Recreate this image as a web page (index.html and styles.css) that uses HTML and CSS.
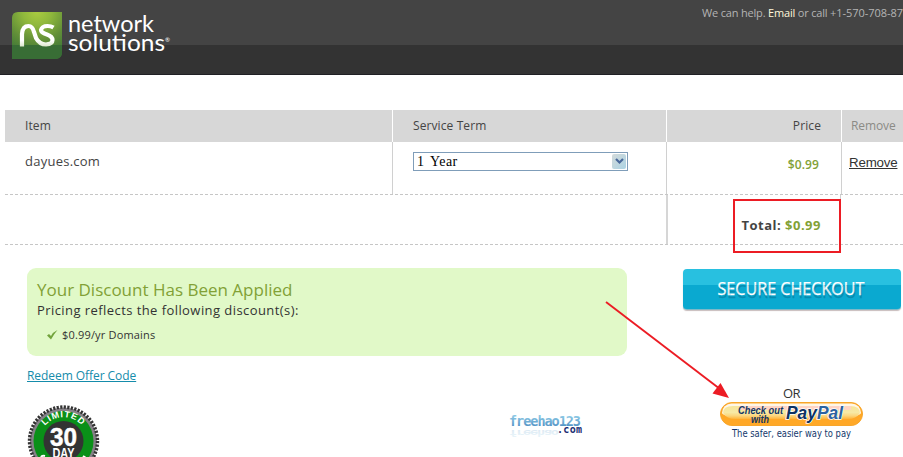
FILE: index.html
```html
<!DOCTYPE html>
<html lang="en">
<head>
<meta charset="utf-8">
<title>Network Solutions - Cart</title>
<link rel="stylesheet" href="styles.css">
</head>
<body>
<header class="header">
  <svg class="logo" width="170" height="50" viewBox="0 0 170 50">
    <defs>
      <radialGradient id="leaf" cx=".5" cy="0" r=".95"><stop offset="0" stop-color="#a9cb40"/><stop offset=".3" stop-color="#8fb83c"/><stop offset=".65" stop-color="#628f38"/><stop offset="1" stop-color="#3d7637"/></radialGradient>
      <linearGradient id="ribbon" x1="0" y1="0" x2="0" y2="1"><stop offset="0" stop-color="#fff"/><stop offset=".7" stop-color="#fff"/><stop offset="1" stop-color="#dbe6cc"/></linearGradient>
    </defs>
    <path d="M6 0H50V40Q50 47 43 47H0V6Q0 0 6 0Z" fill="url(#leaf)"/>
    <path d="M0 33H50V40Q50 47 43 47H0Z" fill="#386d35"/>
    <path d="M10 34.500V22Q10.500 14 16.500 14Q20.500 14 22 20L24 26Q27.500 32.500 34 32.500Q40.500 32 40.500 28Q40.500 24.500 35 22.500Q29 20.500 29 18Q30 14 35.500 14Q39 14 41.500 15.500" fill="none" stroke="url(#ribbon)" stroke-width="4.200"/>
    <g class="logo-text" transform="scale(1 1.120)"><text x="56" y="17.800" textLength="86" lengthAdjust="spacingAndGlyphs">network</text><text x="56" y="34.800" textLength="97" lengthAdjust="spacingAndGlyphs">solutions</text></g>
    <text class="logo-reg" x="153" y="30">®</text>
  </svg>
  <p class="help">We can help. <a class="help-link">Email</a> or call <span class="phone">+1-570-708-878</span></p>
</header>
<main class="cart">
  <div class="row row-head">
    <div class="cell">Item</div>
    <div class="cell">Service Term</div>
    <div class="cell price">Price</div>
    <div class="cell muted">Remove</div>
  </div>
  <div class="row row-item">
    <div class="cell domain">dayues.com</div>
    <div class="cell"><div class="select"><span>1 Year</span><span class="select-btn"><svg width="9" height="7" viewBox="0 0 9 7"><path d="M1 1L4.500 4.500L8 1" fill="none" stroke="#49699b" stroke-width="2.200"/></svg></span></div></div>
    <div class="cell price amount">$0.99</div>
    <div class="cell"><a class="remove">Remove</a></div>
  </div>
  <div class="row row-total">
    <div class="cell"></div>
    <div class="cell price total">Total: <span class="total-sum">$0.99</span><span class="highlight"></span></div>
    <div class="cell"></div>
  </div>
  <div class="bottom">
    <section class="left">
      <div class="discount">
        <h2 class="discount-title">Your Discount Has Been Applied</h2>
        <p class="discount-text">Pricing reflects the following discount(s):</p>
        <p class="discount-item"><svg width="11" height="10" viewBox="0 0 11 10"><path d="M0 5.500L2 4L4 6Q6 2 10.500 0Q7 4 4 9.500Z" fill="#72a33c"/></svg><span>$0.99/yr Domains</span></p>
      </div>
      <a class="redeem">Redeem Offer Code</a>
      <div class="badges">
        <svg class="seal" width="73" height="53" viewBox="0 0 73 53">
          <circle cx="36.500" cy="36" r="33.500" fill="#858187"/>
          <circle cx="36.500" cy="36" r="34" fill="none" stroke="#333" stroke-width="3.400" stroke-dasharray="2.200 1.360"/>
          <circle cx="36.500" cy="36" r="30" fill="#0a9018"/>
          <circle cx="36.500" cy="36" r="20" fill="#333"/>
          <path id="seal-arc" d="M14.500 26.500A24 24 0 0 1 58.500 26.500" fill="none"/>
          <text class="seal-limited"><textPath href="#seal-arc" startOffset="50%">LIMITED</textPath></text>
          <text class="seal-num" x="36.500" y="41" textLength="27" lengthAdjust="spacingAndGlyphs">30</text>
          <text class="seal-day" x="36.500" y="53" textLength="22" lengthAdjust="spacingAndGlyphs">DAY</text>
          <path d="M14 52q1-2 4-1M56 51l3 2" stroke="#fff" stroke-width="2" fill="none"/>
        </svg>
        <svg class="watermark" width="76" height="28" viewBox="0 0 76 28">
          <defs><linearGradient id="wm" x1="0" y1="0" x2="0" y2="1"><stop offset=".2" stop-color="#8cc8e4"/><stop offset="1" stop-color="#4686bd"/></linearGradient></defs>
          <text class="wm-name" x="0" y="14" textLength="72" lengthAdjust="spacing">freehao123</text>
          <text class="wm-name wm-mirror" transform="scale(1 -.6)" x="0" y="-30" textLength="50" lengthAdjust="spacing" aria-hidden="true">freehao</text>
          <text class="wm-com" x="48" y="20.500" textLength="25" lengthAdjust="spacing">.com</text>
        </svg>
      </div>
    </section>
    <aside class="pay">
      <div class="checkout"><svg width="217" height="40" viewBox="0 0 217 40"><text class="checkout-label" x="34.500" y="26" textLength="147" lengthAdjust="spacingAndGlyphs">SECURE CHECKOUT</text></svg></div>
      <p class="or">OR</p>
      <svg class="paypal" width="143" height="41" viewBox="0 0 143 41">
        <defs><linearGradient id="gold" x1="0" y1="0" x2="0" y2="1"><stop offset="0" stop-color="#f6e59c"/><stop offset=".5" stop-color="#f7e9a4"/><stop offset=".75" stop-color="#fbd67e"/><stop offset="1" stop-color="#ffb53a"/></linearGradient></defs>
        <rect x=".5" y=".5" width="142" height="23" rx="11.500" fill="#ffa826" stroke="#f7a62c"/>
        <rect x="2" y="1.500" width="139" height="19" rx="9.500" fill="#fff7e8"/>
        <path d="M1.500 11Q5 14.500 13 14.500H130Q138 14.500 141.500 11Q141 23 130 23H13Q2 23 1.500 11Z" fill="#ffa827"/>
        <path d="M3 11Q3 4 13 4H130Q140 4 140 11Q136 17 128 17H15Q7 17 3 11Z" fill="url(#gold)"/>
        <path d="M20 4H131V8H20Z" fill="#ffd4c4"/>
        <text class="pp-check" x="18" y="12" textLength="45" lengthAdjust="spacingAndGlyphs">Check out</text>
        <text class="pp-check" x="31" y="21" textLength="18" lengthAdjust="spacingAndGlyphs">with</text>
        <text class="pp-name" x="66" y="17" textLength="57" lengthAdjust="spacingAndGlyphs">Pay<tspan fill="#2c62a0">Pal</tspan></text>
        <text class="pp-tag" x="12" y="35" textLength="119" lengthAdjust="spacingAndGlyphs">The safer, easier way to pay</text>
      </svg>
    </aside>
  </div>
  <svg class="arrow" width="126" height="98" viewBox="0 0 126 98"><path d="M1 1L115 88" stroke="#ec1c24" stroke-width="1.900"/><path d="M124 97L107.500 92.500L115.500 82Z" fill="#ec1c24"/></svg>
</main>
</body>
</html>
```
FILE: styles.css
```css
* { box-sizing: border-box; }
body { margin: 0; width: 903px; height: 457px; overflow: hidden; background: #fff; color: #444; font: 12px/16px "Open Sans", "Trebuchet MS", sans-serif; }
p, h2 { margin: 0; font-weight: 400; }

.header { display: flex; justify-content: space-between; height: 75px; padding: 12px 0 0 12px; background: linear-gradient(#444 45px, #333 45px); border-bottom: 1px solid #202024; overflow: hidden; }
.logo-text { font: 20.5px Lato, sans-serif; fill: #fff; }
.logo-reg { font: 6px Lato, sans-serif; fill: #fff; }
.help { width: 201px; margin-top: -7px; white-space: nowrap; color: #b4b4b4; font-size: 11px; letter-spacing: -.18px; }
.help-link { color: #fff8dc; }
.phone { letter-spacing: -.05px; }

.cart { position: relative; padding: 35px 0 0 5px; }
.row { display: grid; grid-template-columns: 387px 274px 175px 62px; }
.cell { padding-left: 20px; }
.row-head { height: 32px; background: #d7d7d7; line-height: 32px; letter-spacing: .1px; }
.row-head .cell + .cell { border-left: 1px solid #fff; }
.row .price { padding: 0 20px 0 0; text-align: right; }
.row-head .cell:last-child { padding-left: 9px; color: #8b8b86; letter-spacing: -.1px; }
.row-item { height: 53px; border-bottom: 1px dashed #c6c6c6; }
.row-item .cell + .cell { border-left: 1px solid #d0d0d0; }
.row-item .cell:last-child { padding: 13px 0 0 7px; }
.row-item .domain { padding-top: 11px; font-size: 13px; letter-spacing: .25px; }
.row-item .amount { padding: 15px 22px 0 0; color: #82a136; font-weight: 600; letter-spacing: .1px; }
.remove { color: #333; font: 13.33px/16px "Liberation Sans", Arial, sans-serif; letter-spacing: -.2px; text-decoration: underline; }
.select { display: flex; justify-content: space-between; width: 215px; height: 19px; margin-top: 10px; padding: 1px 1px 1px 3px; border: 1px solid #7f9db9; color: #000; font: 14px/16px "Liberation Serif", serif; letter-spacing: .5px; word-spacing: 2px; background: #fff; }
.select-btn { display: flex; align-items: center; justify-content: center; width: 14px; height: 15px; border-radius: 2px; background: linear-gradient(135deg, #d3dada, #abd3e4); }
.row-total { grid-template-columns: 661px 175px 62px; height: 50px; border-bottom: 1px dashed #c6c6c6; }
.row-total .total { position: relative; padding-top: 22px; border-left: 2px solid #d6d6d6; border-right: 1px solid #d0d0d0; font-weight: 700; font-size: 13px; letter-spacing: .5px; padding-right: 19px; white-space: nowrap; }
.total-sum { color: #82a136; }
.highlight { position: absolute; left: 65px; top: 4px; width: 108px; height: 54px; border: 2px solid #ec1c24; }

.bottom { display: flex; justify-content: space-between; padding: 23px 2px 0 22px; }
.left { width: 600px; }
.discount { height: 88px; padding: 12px 10px; border-radius: 9px; background: #e1f9c8; color: #333; }
.discount-title { color: #82a136; font-size: 17px; line-height: 20px; white-space: nowrap; }
.discount-text { font-size: 13px; line-height: 20px; letter-spacing: .43px; }
.discount-item { display: flex; align-items: center; gap: 4px; margin: 7px 0 0 10px; font-size: 11px; letter-spacing: .17px; }
.redeem { display: block; width: max-content; margin-top: 12px; color: #158cab; letter-spacing: -.06px; text-decoration: underline; }
.badges { display: flex; margin-top: 21px; }
.seal-limited { font: 700 9px "Liberation Sans", sans-serif; letter-spacing: .9px; fill: #fff; text-anchor: middle; }
.seal-num { font: 700 26px "Liberation Sans", sans-serif; fill: #fff; stroke: #fff; stroke-width: .5px; text-anchor: middle; }
.seal-day { font: 700 14px "Liberation Sans", sans-serif; fill: #fff; text-anchor: middle; }
.watermark { margin: 7px 0 0 409px; }
.wm-name { font: 700 13.5px "DejaVu Sans Mono", monospace; fill: url(#wm); }
.wm-mirror { opacity: .2; }
.wm-com { font: 700 10px "DejaVu Sans Mono", monospace; fill: #1b2e72; }
.pay { display: flex; flex-direction: column; width: 218px; padding-top: 1px; }
.checkout { height: 41px; border-radius: 4px; background: linear-gradient(#28c0e0 16px, #0aa9d0 16px); border-bottom: 1px solid #7eb9c8; box-shadow: 0 1px 1px #c8bcbc; }
.checkout-label { font: 500 17.500px "Open Sans", sans-serif; fill: #fff; stroke: #fff; stroke-width: .25px; text-shadow: 1px 3px 0 #078caf; }
.or { margin: 76px 0 0 100px; font-size: 13px; line-height: 15px; letter-spacing: -.5px; color: #333; }
.paypal { margin: 1px 0 0 37px; }
.pp-check { font: italic 700 10.500px "Liberation Sans", sans-serif; fill: #123765; }
.pp-name { font: italic 700 17.500px "Liberation Sans", sans-serif; fill: #0d3263; stroke: #fff; stroke-width: 1.5px; paint-order: stroke; }
.pp-tag { font: 10px "DejaVu Sans", sans-serif; fill: #13386c; }
.arrow { position: absolute; left: 605px; top: 226px; }
```
